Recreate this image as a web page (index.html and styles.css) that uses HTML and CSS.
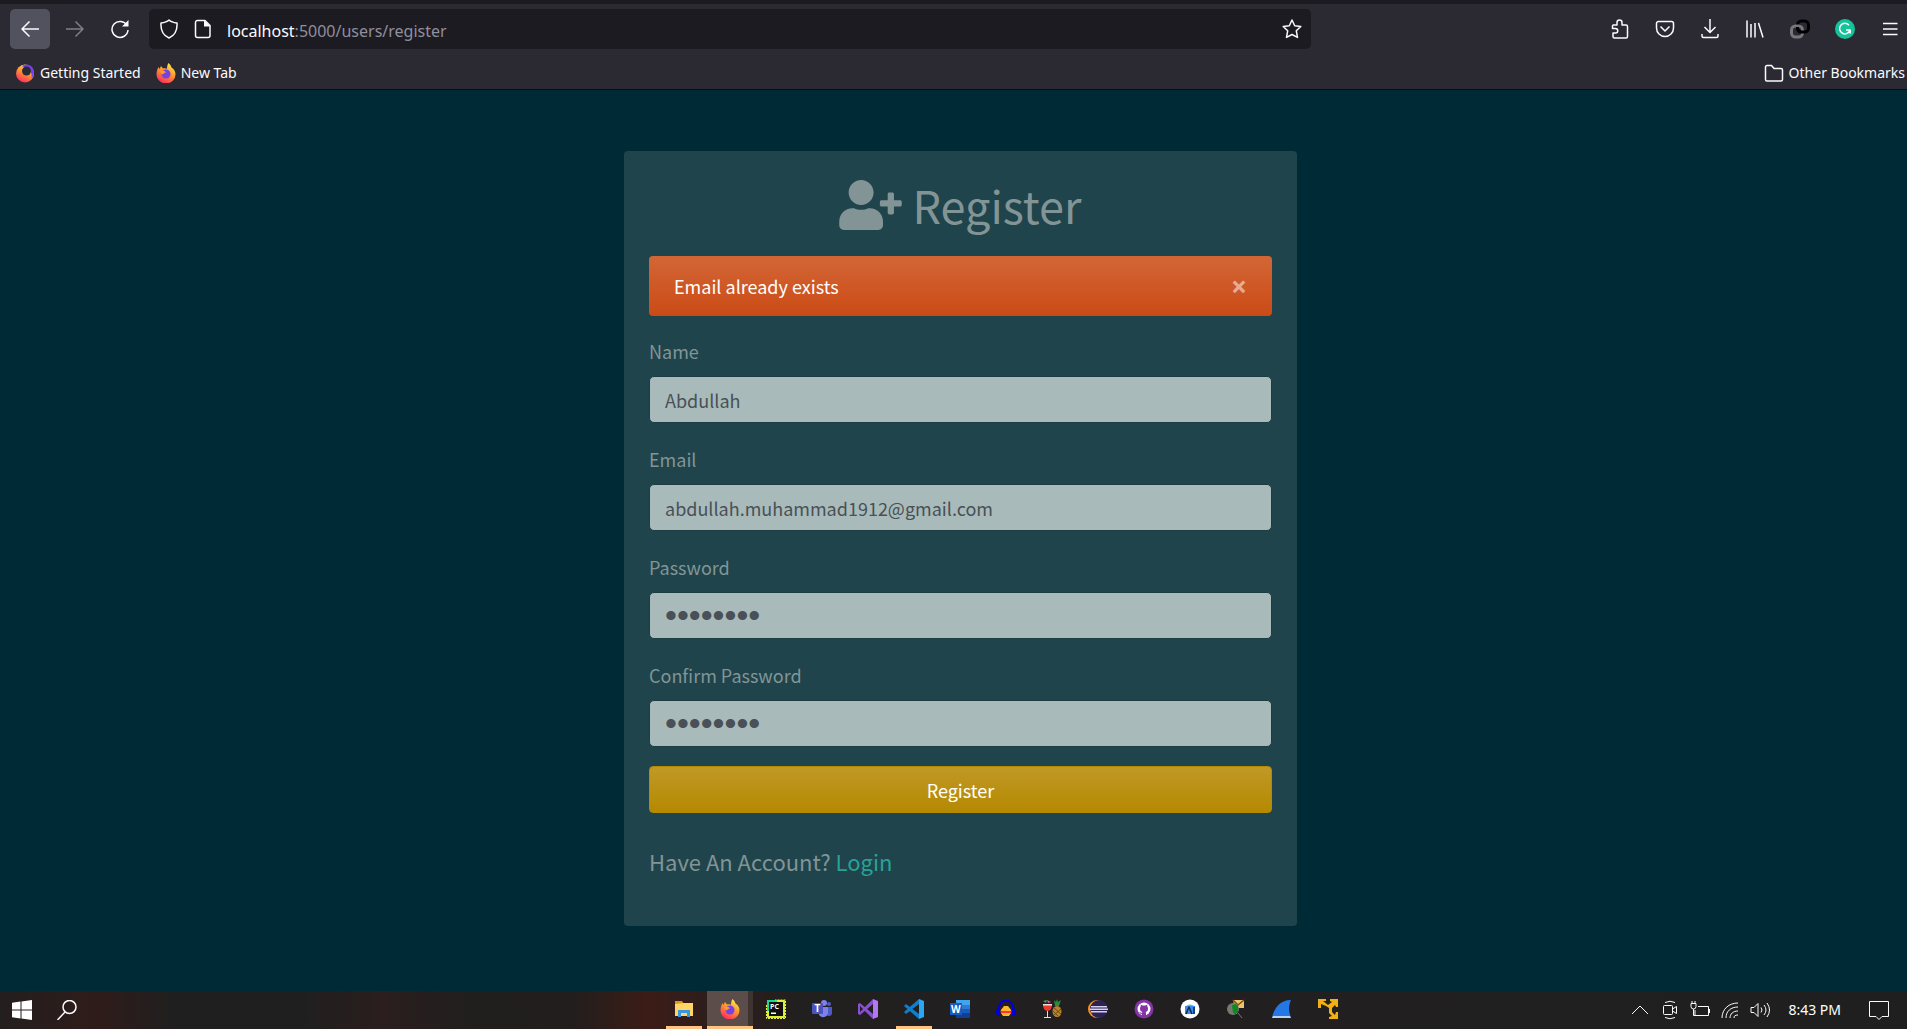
FILE: index.html
```html
<!DOCTYPE html>
<html lang="en">
<head>
<meta charset="utf-8">
<title>Register</title>
<link rel="stylesheet" href="styles.css">
</head>
<body>
<header class="browser">
  <nav class="toolbar" aria-label="Browser toolbar">
    <button class="tool nav-tool active" aria-label="Back"><svg class="icon" viewBox="0 0 20 20"><path d="M19 10H2M9.500 2.500L2 10l7.500 7.500"/></svg></button>
    <button class="tool nav-tool muted" aria-label="Forward"><svg class="icon" viewBox="0 0 20 20"><path d="M1 10h17M10.500 2.500L18 10l-7.500 7.500"/></svg></button>
    <button class="tool nav-tool" aria-label="Reload"><svg class="icon reload" viewBox="0 0 20 20"><path d="M17 6.500A8 8 0 1 0 18 11"/><path class="solid" d="M18.500 1v6.500H12z"/></svg></button>
    <div class="address">
      <svg class="icon" viewBox="0 0 20 20"><path d="M10 1C8 3 5 3.700 2 4c-.5 7 2 12.500 8 15 6-2.500 8.500-8 8-15-3-.3-6-1-8-3z"/></svg>
      <svg class="icon" viewBox="0 0 20 20"><path d="M4.500 1.500H12l5 5v10a2 2 0 0 1-2 2H4.500a2 2 0 0 1-2-2v-13a2 2 0 0 1 2-2z"/><path class="solid" d="M11 1l6.500 6.500H11z"/></svg>
      <span class="url"><b>localhost</b>:5000/users/register</span>
      <button class="tool star" aria-label="Bookmark this page"><svg class="icon" viewBox="0 0 20 20"><path d="M10 1l2.700 5.700 6.100.8-4.500 4.300 1.200 6.600L10 15.500l-5.500 2.900 1.200-6.600L1.200 7.500l6.100-.8z"/></svg></button>
    </div>
    <div class="tools">
      <button class="tool" aria-label="Extensions"><svg class="icon" viewBox="0 0 20 20"><path d="M3 6h4V3.500a2.500 2.500 0 0 1 5 0V6h4a1.500 1.500 0 0 1 1.500 1.500v10A1.500 1.500 0 0 1 16 19H4.500A1.500 1.500 0 0 1 3 17.500V14h2.500a2 2 0 0 0 0-4.500H2.500V7z"/></svg></button>
      <button class="tool" aria-label="Pocket"><svg class="icon" viewBox="0 0 20 20"><path d="M3.500 2.500h13a2 2 0 0 1 2 2V9a8.500 8.500 0 0 1-17 0V4.500a2 2 0 0 1 2-2zM5.500 7.500L10 12l4.500-4.500"/></svg></button>
      <button class="tool" aria-label="Downloads"><svg class="icon" viewBox="0 0 20 20"><path d="M10 0v13M4.500 8l5.500 5.500L15.500 8M2 15v2a1.500 1.500 0 0 0 1.500 1.500h13A1.500 1.500 0 0 0 18 17v-2"/></svg></button>
      <button class="tool" aria-label="Library"><svg class="icon" viewBox="0 0 20 20"><path d="M2 1.500v17M6 5v13.500M10 4v14.500M13.500 4L18 18.500"/></svg></button>
      <button class="tool" aria-label="Link extension"><svg class="icon chain" viewBox="0 0 20 20"><rect class="black" x="7.500" y="2" width="11" height="11" rx="4"/><rect class="gray" x="1.500" y="7" width="11" height="11" rx="4"/><path class="black" d="M7.500 8v1a4 4 0 0 0 4 4h3"/></svg></button>
      <button class="tool" aria-label="Grammarly"><svg class="icon" viewBox="0 0 20 20"><circle cx="10" cy="10" r="10" fill="#15c39a" stroke="none"/><path d="M14 6.200A5.300 5.300 0 1 0 15 11h-4M15.200 11v3.500"/></svg></button>
      <button class="tool" aria-label="Menu"><svg class="icon" viewBox="0 0 20 20"><path d="M3 4.500h14.500M3 10h14.500M3 15.500h14.500"/></svg></button>
    </div>
  </nav>
  <nav class="bookmarks" aria-label="Bookmarks">
    <a href="#start"><svg class="icon" viewBox="0 0 20 20"><circle cx="10" cy="10.500" r="9" fill="url(#fx)" stroke="none"/><path d="M7 3.500C10 0 18 1 19 9c0 3-1 5-2.500 6.500C18 10 14 4 7 3.500z" fill="#7542e5" stroke="none"/><circle cx="11.500" cy="8" r="4.500" fill="#2b2a33" stroke="none"/></svg>Getting Started</a>
    <a href="#new"><svg class="icon" viewBox="0 0 20 20"><use href="#firefox"/></svg>New Tab</a>
    <a href="#other" class="other"><svg class="icon" viewBox="0 0 20 20"><path d="M3 2.500h4.500l2.500 3h7A1.500 1.500 0 0 1 18.500 7v9.500A1.500 1.500 0 0 1 17 18H3a1.500 1.500 0 0 1-1.500-1.500V4A1.500 1.500 0 0 1 3 2.500z"/></svg>Other Bookmarks</a>
  </nav>
</header>

<main class="page">
  <section class="card">
    <h1><svg class="user-plus" viewBox="0 0 640 512" aria-hidden="true"><path d="M624 208h-64v-64c0-8.800-7.200-16-16-16h-32c-8.800 0-16 7.200-16 16v64h-64c-8.800 0-16 7.200-16 16v32c0 8.800 7.200 16 16 16h64v64c0 8.800 7.200 16 16 16h32c8.800 0 16-7.200 16-16v-64h64c8.800 0 16-7.200 16-16v-32c0-8.800-7.200-16-16-16zm-400 48c70.700 0 128-57.300 128-128S294.700 0 224 0 96 57.300 96 128s57.300 128 128 128zm89.600 32h-16.700c-22.200 10.200-46.900 16-72.900 16s-50.600-5.800-72.900-16h-16.700C60.200 288 0 348.200 0 422.400V464c0 26.500 21.500 48 48 48h352c26.500 0 48-21.500 48-48v-41.600c0-74.200-60.200-134.400-134.400-134.400z"/></svg>Register</h1>
    <div class="alert" role="alert">Email already exists<button class="close" aria-label="Close">×</button></div>
    <form>
      <div class="field"><label for="name">Name</label><input id="name" type="text" value="Abdullah"></div>
      <div class="field"><label for="email">Email</label><input id="email" type="email" value="abdullah.muhammad1912@gmail.com"></div>
      <div class="field"><label for="password">Password</label><input id="password" type="password" value="12345678"></div>
      <div class="field"><label for="password2">Confirm Password</label><input id="password2" type="password" value="12345678"></div>
      <button class="submit" type="submit">Register</button>
    </form>
    <p class="lead">Have An Account? <a href="#login">Login</a></p>
  </section>
</main>

<footer class="taskbar">
  <div class="start">
    <button aria-label="Start"><svg class="icon" viewBox="0 0 20 20"><path fill="#fff" stroke="none" d="M0 2.800l8.500-1.200v7.900H0zM9.500 1.500L20 0v9.500H9.500zM0 10.500h8.500v7.900L0 17.200zM9.500 10.500H20V20L9.500 18.500z"/></svg></button>
    <button aria-label="Search"><svg class="icon" viewBox="0 0 20 20"><circle cx="12.500" cy="7" r="6.500"/><path d="M8 12l-7.500 8"/></svg></button>
  </div>
  <div class="apps">
    <button class="running" aria-label="File Explorer"><svg class="icon" viewBox="0 0 20 20"><path fill="#d99a1c" d="M1 2h7l2 3H1z"/><path fill="#ffd566" d="M1 5l9-1h9v13H1z"/><path fill="#3a96dd" d="M4 18v-7h12v7h-3v-4H7v4z"/></svg></button>
    <button class="running current" aria-label="Firefox"><svg class="icon" viewBox="0 0 20 20">
      <defs><linearGradient id="fx" x1=".8" y1="0" x2=".3" y2="1"><stop offset="0" stop-color="#fff44f"/><stop offset=".45" stop-color="#ff9a2e"/><stop offset="1" stop-color="#ff2a5f"/></linearGradient></defs>
      <g id="firefox" stroke="none"><path fill="url(#fx)" d="M12.500 0c2 1.500 2.500 3 3 4.500 2.500 1.500 4 4 4 7A9.500 9 0 0 1 .5 11.500C.5 8 1.500 6 2.500 4l1 2L5 3l2 2.500c1.500-.5 3-.3 4 .3C11 3.500 11.500 1.500 12.500 0z"/><circle cx="10" cy="11" r="4.500" fill="#7542e5"/><path fill="#ff9a2e" d="M4 8c3-1 5 0 6 1.500-2 0-2 1.500-4 2z"/></g></svg></button>
    <button aria-label="PyCharm"><svg class="icon" viewBox="0 0 20 20"><rect x="2" y="2" width="16" height="16" fill="#2fd36c" stroke="#d8f03c" stroke-width="2"/><path fill="none" stroke="#21d789" stroke-width="2" d="M2 12V2h9"/><path fill="none" stroke="#e8f03c" stroke-width="1" stroke-dasharray="2 1" d="M.5 6v13.500h19V1H9"/><rect x="3" y="3" width="14" height="14" fill="#111"/><text x="4" y="10" font-size="7" font-weight="700">PC</text><path fill="#fff" d="M5 13.500h5V15H5z"/></svg></button>
    <button aria-label="Teams"><svg class="icon" viewBox="0 0 20 20"><circle cx="17" cy="5" r="2" fill="#5059c9"/><circle cx="12" cy="4" r="3" fill="#7b83eb"/><path fill="#5059c9" d="M14 8h6v6a3 3 0 0 1-6 0z"/><path fill="#7b83eb" d="M7 8h9v6a5 5 0 0 1-9 2z"/><rect y="4" width="11" height="11" rx="1" fill="#4b53bc"/><text x="2.500" y="13" font-size="10" font-weight="700">T</text></svg></button>
    <button aria-label="Visual Studio"><svg class="icon" viewBox="0 0 20 20"><path fill="#b179f1" d="M15 0l5 2v16l-5 2z"/><path fill="#8a4fd0" d="M0 5l2-1 13 11v5L2 7v6l13-13v5L2 16l-2-1z"/></svg></button>
    <button class="running" aria-label="VS Code"><svg class="icon" viewBox="0 0 20 20"><path fill="#0f7fcc" d="M0 13L15 0v5L2 15zM0 7l2-2 13 10v5z"/><path fill="#2aa7f0" d="M15 0l5 2v16l-5 2z"/></svg></button>
    <button aria-label="Word"><svg class="icon" viewBox="0 0 20 20"><path fill="#41a5ee" d="M6 1h14v5H6z"/><path fill="#2b7cd3" d="M6 6h14v4H6z"/><path fill="#185abd" d="M6 10h14v4H6z"/><path fill="#103f91" d="M6 14h14v5H6z"/><rect y="4" width="12" height="12" fill="#185abd"/><text x="1" y="13.500" font-size="10" font-weight="700">W</text></svg></button>
    <button aria-label="Audacity"><svg class="icon" viewBox="0 0 20 20"><path fill="none" stroke="#0000dc" stroke-width="2" d="M3 12C1-2 19-2 17 12"/><path fill="#0000dc" d="M2 9h2v8H2L0 15v-4zM18 9h-2v8h2l2-2v-4z"/><ellipse cx="10" cy="12.500" rx="5.500" ry="4" fill="#f33"/><path fill="#ffb52e" d="M5 11l3-4h4l3 4v1H5zM5 14h10l-2 3H7z"/></svg></button>
    <button aria-label="Cocktail"><svg class="icon" viewBox="0 0 20 20"><ellipse cx="15" cy="12.500" rx="4.500" ry="5.500" fill="#b9822c"/><path fill="none" stroke="#6e4a14" stroke-width="1" d="M12 9l7 6M11 12l5 5M19 10l-7 6"/><path fill="#2a8c3a" d="M12 1l2 2 1-3 1 3 3-2-2 6h-4z"/><path fill="#3fae4a" d="M1 2l4-1-1 3z"/><path fill="#e55bb5" d="M5 1l4 2-3 1z"/><path fill="#e43d30" d="M1 6h9q0 5-4 6H5Q1 11 1 6z"/><path fill="#f4d9d2" d="M1 5h9v1.500H1zM5 12h1v6h3v1H2v-1h3z"/></svg></button>
    <button aria-label="Eclipse"><svg class="icon" viewBox="0 0 20 20"><circle cx="9" cy="10" r="9" fill="#f7941e"/><circle cx="11" cy="10" r="9" fill="#2c2255"/><path fill="#d5d0ec" d="M3 7h16v1.500H3zM2 9.500h18V11H2zM3 12h16v1.500H3z"/></svg></button>
    <button aria-label="GitHub Desktop"><svg class="icon" viewBox="0 0 20 20"><circle cx="10" cy="10" r="9.500" fill="#8534a5"/><circle cx="10" cy="10" r="6.500" fill="#fff"/><path fill="#8534a5" d="M8 17v-2c-2 0-2-1-3-2 1.500 0 2 1 3 1 0-.5.200-.8.500-1C6.500 12.700 6 11 6 9.500 6 8.700 6.200 8 6.700 7.500V5.500L8.500 6.500h3l1.800-1v2c.5.500.7 1.200.7 2 0 1.500-.5 3.200-2.500 3.500.3.300.5.700.5 1V17z"/></svg></button>
    <button aria-label="Android Studio"><svg class="icon" viewBox="0 0 20 20"><circle cx="10" cy="10" r="9.500" fill="#fff"/><path fill="#3ddc84" d="M6 7a5 4 0 0 1 8 0z"/><rect x="5" y="7" width="10" height="8" fill="#4285f4"/><path fill="none" stroke="#073042" stroke-width="1.500" d="M6 15l3-7 3 7M14 8v7"/></svg></button>
    <button aria-label="Packet tool"><svg class="icon" viewBox="0 0 20 20"><path fill="#eec36f" d="M7 1h11v8H9z"/><path fill="none" stroke="#7a4e10" d="M7 1l5 5 6-5"/><circle cx="7" cy="10" r="6" fill="#777a70"/><path fill="none" stroke="#0c8b24" stroke-width="2" d="M7 7h4v6H8zM9 5v10"/><path fill="none" stroke="#777" stroke-width="1" d="M12 14l4 5"/></svg></button>
    <button aria-label="Wireshark"><svg class="icon" viewBox="0 0 20 20"><path fill="#2677e6" d="M0 19C2 9 8 1 19 1c-3 7-2 12 0 18z"/><path fill="#b7d4f7" d="M0 19l1-2h17l1 2z"/></svg></button>
    <button aria-label="Network arrows"><svg class="icon" viewBox="0 0 20 20"><path fill="#f2b010" d="M0 0h8v2H5l5 4 4-3-2-1V0h8v8h-2l-1-2-3 3v4l3 3 1-3h2v7h-9v-2l3-1-3-3V9L8 7 3 5v4H0z"/></svg></button>
  </div>
  <div class="tray">
    <svg class="icon" viewBox="0 0 20 20"><path d="M2 14l8-8 8 8"/></svg>
    <svg class="icon" viewBox="0 0 20 20"><rect x="3.500" y="5.500" width="9" height="9" rx="1"/><path d="M12.500 9l4-2.500v7l-4-2.500M5 2.500q5-2.500 10 0M5 17.500q5 2.500 10 0"/></svg>
    <svg class="icon" viewBox="0 0 20 20"><path d="M5 10v5.500h13.500v-9H8M19.500 9v4M1 3.500h5v3a2.500 2.500 0 0 1-5 0zM2 3.500V1M5 3.500V1M3.500 9v6.500H5"/></svg>
    <svg class="icon" viewBox="0 0 20 20"><path d="M2 18C2 9 9 3 18 3M6 18C6 11 11 7 18 7M10 18c0-4 3-7 8-7M14 18c0-2 1-3 4-3"/></svg>
    <svg class="icon" viewBox="0 0 20 20"><path d="M1 7.500h3l4-4v13l-4-4H1zM11 7.500q2 2.500 0 5M14 5q4 5 0 10M17 3q5 7 0 14"/></svg>
    <time>8:43 PM</time>
    <svg class="icon" viewBox="0 0 20 20"><path d="M.5 1.500h19v15H13l-3 3-3-3H.5z"/></svg>
  </div>
</footer>
</body>
</html>
```
FILE: styles.css
```css
* { box-sizing: border-box; }

body {
  margin: 0;
  min-height: 100vh;
  display: flex;
  flex-direction: column;
  background: #002b36;
  color: #839496;
  font: 18px/28px "Noto Sans CJK SC", sans-serif;
}

button {
  border: 0;
  padding: 0;
  background: none;
  color: inherit;
  font: inherit;
}

a { text-decoration: none; }

.icon {
  display: block;
  flex: none;
  width: 20px;
  height: 20px;
  fill: none;
  stroke: #fbfbfe;
  stroke-width: 1.5;
  stroke-linejoin: round;
}
.icon .solid { fill: #fbfbfe; stroke: none; }
.icon text { fill: #fff; stroke: none; font-family: "Open Sans", sans-serif; }

/* Browser chrome */
.browser {
  border-top: 4px solid #1c1b22;
  border-bottom: 1px solid #0c0c0d;
  background: #2b2a33;
  color: #fbfbfe;
  font-family: "Noto Sans", sans-serif;
}
.toolbar {
  display: flex;
  align-items: center;
  gap: 5px;
  height: 50px;
  padding-left: 10px;
}
.tool { display: grid; place-items: center; width: 34px; height: 40px; }
.nav-tool { width: 40px; border-radius: 5px; }
.active { background: #52525e; }
.muted { opacity: .4; }
.address {
  display: flex;
  align-items: center;
  gap: 14px;
  flex: 1;
  max-width: 1162px;
  height: 40px;
  margin-left: 4px;
  padding: 0 2px 0 10px;
  border-radius: 5px;
  background: #1c1b22;
}
.url { flex: 1; padding-top: 3px; color: #8f8f9d; font-size: 16px; }
.url b { color: #fbfbfe; font-weight: 400; }
.tools { display: flex; gap: 11px; margin-left: auto; }
.chain .gray { stroke: #77767d; stroke-width: 3; }
.chain .black { stroke: #000; stroke-width: 3; }
.bookmarks {
  display: flex;
  align-items: center;
  gap: 15px;
  height: 35px;
  padding: 2px 2px 0 15px;
}
.bookmarks a {
  display: flex;
  align-items: center;
  gap: 5px;
  color: inherit;
  font-size: 14px;
}
.bookmarks .other { margin-left: auto; }

/* Registration card */
.page {
  flex: 1;
  display: flex;
  justify-content: center;
  align-items: flex-start;
  padding: 61px 0 61px 14px;
}
.card {
  width: 100%;
  max-width: 673px;
  padding: 24px 25px 49px;
  border-radius: 4px;
  background: #1f444b;
}
h1 {
  display: flex;
  justify-content: center;
  align-items: center;
  gap: 10px;
  margin: 0 0 21px;
  font-size: 45px;
  font-weight: 400;
  line-height: 60px;
}
.user-plus { width: 63px; height: 50px; fill: currentColor; }
.alert {
  display: flex;
  justify-content: space-between;
  align-items: center;
  height: 60px;
  margin-bottom: 21px;
  padding: 0 25px;
  border-radius: 4px;
  background: linear-gradient(#d36636, #cb4b16);
  color: #fff;
}
.close { font: 700 28px/28px "Open Sans", sans-serif; opacity: .5; }
.field { display: flex; flex-direction: column; gap: 11px; margin-bottom: 22px; }
.field input {
  width: 100%;
  height: 47px;
  padding: 0 15px;
  border: 1px solid #1b3c43;
  border-radius: 5px;
  background: #a8bbba;
  color: #495057;
  font: inherit;
}
.field input[type="password"] { font: 34px/44px "Liberation Sans", sans-serif; }
.field:nth-of-type(4) { margin-bottom: 19px; }
.submit {
  display: block;
  width: 100%;
  height: 47px;
  border: 1px solid #b58900;
  border-radius: 4px;
  background: linear-gradient(#c09926, #b58900);
  color: #fff;
}
.lead { margin: 32px 0 0; font-size: 22px; line-height: 32px; }
.lead a { color: #2aa198; }

/* Taskbar */
.taskbar {
  display: flex;
  align-items: stretch;
  height: 38px;
  background: linear-gradient(90deg, #231f1e 0, #2f1c1a 5%, #201f1f 9%, #201f1f 16%, #2b1e1e 20%, #201f1e 25%, #221e1d 30%, #3c1c16 34%, #2e1d1b 37%, #221f1f 42%, #201f1f 100%);
  color: #fff;
}
.start { display: flex; gap: 25px; padding: 0 12px; }
.apps { display: flex; margin-left: 30%; }
.apps button {
  display: grid;
  place-items: center;
  width: 46px;
  border-bottom: 3px solid transparent;
}
.apps .icon { stroke: none; }
.apps .running {
  width: 36px;
  margin: 0 5px;
  border-color: #ffc483;
}
.apps .current {
  width: 46px;
  margin: 0;
  background: linear-gradient(90deg, #5c4c4a 41px, #3d3432 41px);
}
.tray {
  display: flex;
  align-items: center;
  gap: 10px;
  margin-left: auto;
  padding-right: 18px;
  font: 14px/20px "Noto Sans", sans-serif;
}
.tray .icon { stroke-width: 1; }
.tray time { margin: 0 18px 0 8px; }
```
